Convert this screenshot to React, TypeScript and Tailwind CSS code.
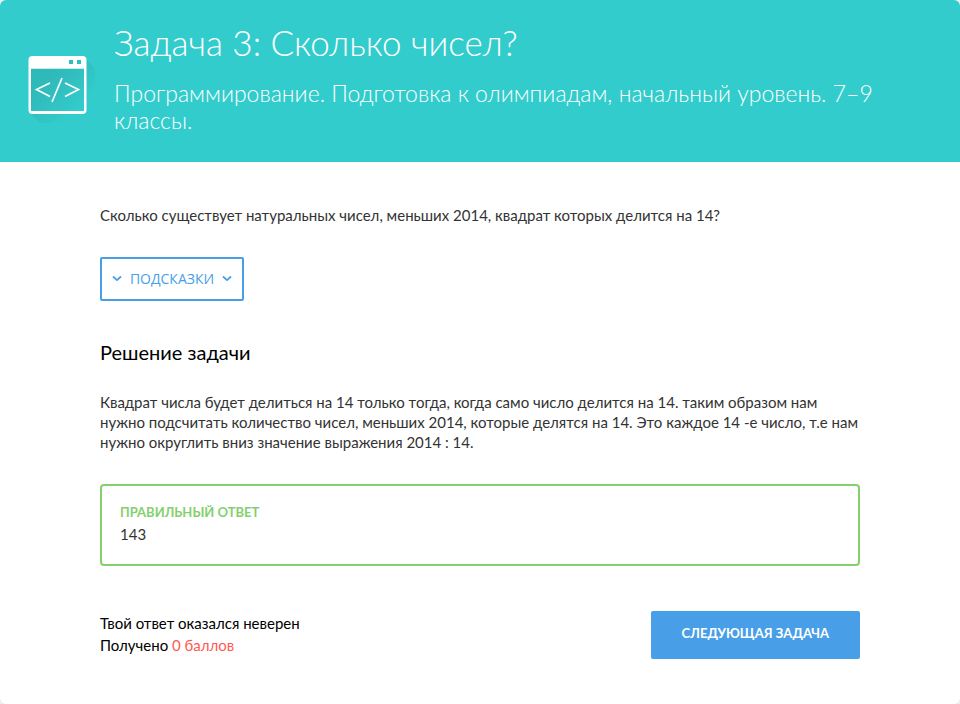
function Chevron() {
  return (
    <svg className="h-2 w-2.5 shrink-0" viewBox="0 0 10 8" fill="none" aria-hidden="true">
      <path d="M1 1.500l4 3.600L9 1.500" stroke="currentColor" strokeWidth="1.800" />
    </svg>
  );
}

function CodeWindowIcon() {
  return (
    <svg className="mt-8 h-[68px] w-[68px] shrink-0" viewBox="0 0 68 68" fill="none" aria-hidden="true">
      <defs>
        <linearGradient id="pane" x1="8" y1="14" x2="48" y2="56" gradientUnits="userSpaceOnUse">
          <stop stopColor="#2eb8b8" />
          <stop offset="0.45" stopColor="#31bdbd" />
          <stop offset="1" stopColor="#33cccc" />
        </linearGradient>
        <linearGradient id="shadow" x1="20" y1="20" x2="52" y2="52" gradientUnits="userSpaceOnUse">
          <stop stopColor="#2eb8b8" />
          <stop offset="1" stopColor="#33cccc" />
        </linearGradient>
      </defs>
      <path d="M57 2l9 9q1 1 1 3v49q0 4-4 4H14q-2 0-4-2l-7-7z" fill="url(#shadow)" />
      <rect x="0.500" y="0" width="58" height="58" rx="4" fill="#fff" />
      <path d="M3 13h53v42H3z" fill="url(#pane)" />
      <path d="M3 12h53v1H3z" fill="#c2eeee" />
      <path d="M41 4h4v4h-4zM49 4h4v4h-4z" fill="#31bdbd" />
      <path d="M22 27 8.500 33.500l13.500 7M37 27l13.500 6.500-13.500 7M34 22l-10 24" stroke="#fff" strokeWidth="1.700" />
    </svg>
  );
}

export default function App() {
  return (
    <div className="min-h-screen bg-[#ececec]">
      <div className="min-h-screen overflow-hidden rounded-md bg-white font-['Lato','Open_Sans',sans-serif] text-[15px] leading-5 text-[#333]">
        <header className="flex gap-[18px] bg-[#33cccc] pt-6 pr-16 pb-7 pl-7 text-white">
          <CodeWindowIcon />
          <div>
            <h1 className="text-[35px] leading-9 font-light">Задача 3: Сколько чисел?</h1>
            <p className="mt-5 text-[23px] leading-[27px] font-light">
              Программирование. Подготовка к олимпиадам, начальный уровень. <span className="whitespace-nowrap">7–9</span> классы.
            </p>
          </div>
        </header>

        <main className="mx-auto max-w-[760px] pt-[43px] pb-11">
          <p>Сколько существует натуральных чисел, меньших 2014, квадрат которых делится на 14?</p>

          <button
            type="button"
            className="mt-8 flex h-11 w-36 items-center justify-center gap-2 rounded-xs border-2 border-[#489fe8] font-['Open_Sans',sans-serif] text-[14px] text-[#489fe8]"
          >
            <Chevron />
            ПОДСКАЗКИ
            <Chevron />
          </button>

          <h2 className="mt-[39px] text-[20px] leading-6 text-black">Решение задачи</h2>
          <p className="mt-7">
            Квадрат числа будет делиться на 14 только тогда, когда само число делится на 14. таким образом нам нужно подсчитать
            количество чисел, меньших 2014, которые делятся на 14. Это каждое 14 -е число, т.е нам нужно округлить вниз значение
            выражения 2014 : 14.
          </p>

          <section className="mt-8 rounded-sm border-2 border-[#84d06e] px-[18px] pt-[14px] pb-5">
            <h3 className="text-[13px] leading-6 font-bold text-[#84d06e]">ПРАВИЛЬНЫЙ ОТВЕТ</h3>
            <p>143</p>
          </section>

          <div className="mt-[45px] flex items-start justify-between">
            <p className="pt-px leading-[22px] text-black">
              Твой ответ оказался неверен
              <br />
              Получено <span className="text-[#ff5a4f]">0 баллов</span>
            </p>
            <button type="button" className="h-12 rounded-xs bg-[#489fe8] px-[31px] pb-1 text-[13px] font-bold text-white">
              СЛЕДУЮЩАЯ ЗАДАЧА
            </button>
          </div>
        </main>
      </div>
    </div>
  );
}
